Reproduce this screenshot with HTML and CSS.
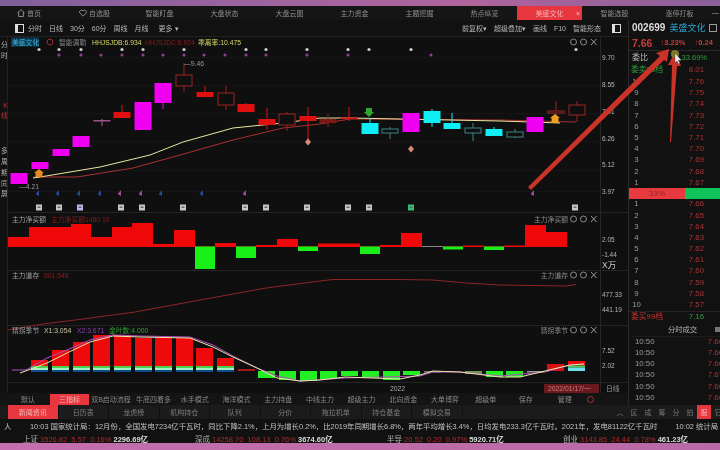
FILE: index.html
```html
<!DOCTYPE html>
<html lang="zh">
<head>
	<meta charset="UTF-8">
	<title>美盛文化</title>
	<link rel="stylesheet" href="styles.css">
	<script src="chart.js" defer></script>
</head>
<body>
	<div class="screen">
		<div class="strip"></div>
		<div class="nav">
			<div class="nav-item first"><svg class="nav-icon" viewBox="0 0 10 10"><path d="M.5 5 5 .8 9.5 5M2 4v5.300h6V4"/></svg>首页</div>
			<div class="nav-item"><svg class="nav-icon" viewBox="0 0 10 10"><path d="M5 9 1 5C-.5 2.500 3 0 5 2.500 7 0 10.500 2.500 9 5Z"/></svg>自选股</div>
			<div class="nav-item">智能盯盘</div>
			<div class="nav-item">大盘状态</div>
			<div class="nav-item">大盘云图</div>
			<div class="nav-item">主力资金</div>
			<div class="nav-item">主题挖掘</div>
			<div class="nav-item">热点纵览</div>
			<div class="nav-item active">美盛文化<span class="tab-close">×</span></div>
			<div class="nav-item">智能选股</div>
			<div class="nav-item">涨停打板</div>
			<div class="nav-min">—</div>
		</div>

		<div class="middle">
			<div class="left">
				<div class="toolbar">
					<span class="tool-box"></span>
					<span class="tool t-first">分时</span>
					<span class="tool">日线</span>
					<span class="tool">30分</span>
					<span class="tool">60分</span>
					<span class="tool">周线</span>
					<span class="tool">月线</span>
					<span class="tool t-more">更多 ▾</span>
					<span class="spacer"></span>
					<span class="tool">前复权▾</span>
					<span class="tool">超级叠加▾</span>
					<span class="tool">画线</span>
					<span class="tool">F10</span>
					<span class="tool">智能形态</span>
					<span class="tool-box t-last"></span>
				</div>
				<div class="chart-row">
					<div class="rail">
						<span>分</span><span>时</span>
						<span class="rail-b">K</span><span class="rail-c">线</span>
						<span class="rail-d">多</span><span>周</span><span>期</span><span>同</span><span>屏</span>
					</div>
					<svg id="chart" class="chart" viewBox="8 37 620 356" width="620" height="356"></svg>
				</div>
				<div class="formulas">
					<span class="f f0">默认</span>
					<span class="f f1 active">三指标</span>
					<span class="f f2">双B启动流程</span>
					<span class="f f3">牛底四看多</span>
					<span class="f f4">水手模式</span>
					<span class="f f4">海洋模式</span>
					<span class="f f4">主力持盘</span>
					<span class="f f4">中线主力</span>
					<span class="f f4">超级主力</span>
					<span class="f f4">北向资金</span>
					<span class="f f4">大单博弈</span>
					<span class="f f5">超级单</span>
					<span class="f f5">保存</span>
					<span class="f f6">管理</span>
					<span class="f-icon"></span>
				</div>
			</div>

			<div class="side">
				<div class="s-code"><b>002699</b><span class="s-name">美盛文化</span><span class="s-box"></span></div>
				<div class="s-price"><b>7.66</b><span>↑3.23%</span><span class="s-diff">↑0.24</span></div>
				<div class="s-ratio"><span>委比</span><em>33.69%</em></div>
				<div class="s-row s-head"><span class="green">委卖99档</span><i>8.01</i></div>
				<div class="s-row"><span>10</span><i>7.76</i></div>
				<div class="s-row"><span>9</span><i>7.75</i></div>
				<div class="s-row"><span>8</span><i>7.74</i></div>
				<div class="s-row"><span>7</span><i>7.73</i></div>
				<div class="s-row"><span>6</span><i>7.72</i></div>
				<div class="s-row"><span>5</span><i>7.71</i></div>
				<div class="s-row"><span>4</span><i>7.70</i></div>
				<div class="s-row"><span>3</span><i>7.69</i></div>
				<div class="s-row"><span>2</span><i>7.68</i></div>
				<div class="s-row"><span>1</span><i>7.67</i></div>
				<div class="s-bar"><span class="s-bar-red">33%</span><span class="s-bar-green"></span></div>
				<div class="s-row"><span>1</span><i>7.66</i></div>
				<div class="s-row"><span>2</span><i>7.65</i></div>
				<div class="s-row"><span>3</span><i>7.64</i></div>
				<div class="s-row"><span>4</span><i>7.63</i></div>
				<div class="s-row"><span>5</span><i>7.62</i></div>
				<div class="s-row"><span>6</span><i>7.61</i></div>
				<div class="s-row"><span>7</span><i>7.60</i></div>
				<div class="s-row"><span>8</span><i>7.59</i></div>
				<div class="s-row"><span>9</span><i>7.58</i></div>
				<div class="s-row"><span>10</span><i>7.57</i></div>
				<div class="s-row s-buy"><span class="red">委买99档</span><i class="green">7.16</i></div>
				<div class="s-trade-head">分时成交<span class="s-trade-icon"></span></div>
				<div class="s-trade"><span>10:50</span><i>7.66</i></div>
				<div class="s-trade"><span>10:50</span><i>7.66</i></div>
				<div class="s-trade"><span>10:50</span><i>7.66</i></div>
				<div class="s-trade"><span>10:50</span><i>7.67</i></div>
				<div class="s-trade"><span>10:50</span><i>7.66</i></div>
				<div class="s-trade"><span>10:50</span><i>7.66</i></div>
			</div>
		</div>

		<div class="tabs">
			<span class="tab active">新闻资讯</span>
			<span class="tab">日历表</span>
			<span class="tab">龙虎榜</span>
			<span class="tab">机构持仓</span>
			<span class="tab">队列</span>
			<span class="tab">分价</span>
			<span class="tab">拖拉机单</span>
			<span class="tab">持仓基金</span>
			<span class="tab">模拟交易</span>
			<span class="mini up">︿</span>
			<span class="mini">区</span><span class="mini">成</span><span class="mini">筹</span><span class="mini">分</span><span class="mini">拍</span>
			<span class="mini active">报</span><span class="mini">它</span>
		</div>
		<div class="news">
			<span class="news-cut">人</span>
			<span class="news-text">10:03 国家统计局：12月份，全国发电7234亿千瓦时，同比下降2.1%，上月为增长0.2%，比2019年同期增长6.8%，两年平均增长3.4%，日均发电233.3亿千瓦时。2021年，发电81122亿千瓦时</span>
			<span class="news-next">10:02 统计局</span>
		</div>
		<div class="ticker">
			<span class="tick t1">上证 <i>3526.82 &nbsp;5.57 &nbsp;0.16%</i> <b>2296.69亿</b></span>
			<span class="tick t2">深成 <i>14258.70 &nbsp;108.13 &nbsp;0.76%</i> <b>3674.60亿</b></span>
			<span class="tick t3">半导 <i>20.52 &nbsp;0.20 &nbsp;0.97%</i> <b>5920.71亿</b></span>
			<span class="tick t4">创业 <i>3143.85 &nbsp;24.44 &nbsp;0.78%</i> <b>461.23亿</b></span>
		</div>
		<div class="strip bottom"></div>

		<!-- red arrows drawn over the screen -->
		<svg class="overlay" viewBox="0 0 720 450" width="720" height="450">
			<polygon points="528,187 531,190 664,60 667,62 669,49 656,53 660,56"/>
			<polygon points="670,142 671,142 677,66 681,66 675,52 668,65 672,65"/>
			<circle class="dot" cx="675" cy="54" r="4"/>
			<path class="cursor" d="M675 53v10l2-2 1.500 3 1.500-.7-1.500-3h3Z"/>
		</svg>
	</div>
</body>
</html>
```

FILE: styles.css
```css
html, body { margin: 0; height: 100%; background: #111; overflow: hidden; }
.screen { position: relative; width: 720px; height: 450px; display: flex; flex-direction: column; overflow: hidden; background: #111; color: #a8a8a8; font: 7px/1 "Liberation Sans", "Noto Sans CJK SC", sans-serif; filter: blur(0.35px); }
.strip { height: 6px; flex: none; background: linear-gradient(90deg, #7f5f9b, #a0649f 40%, #b0649c 65%, #8a6098); }
.strip.bottom { flex: 1; background: linear-gradient(90deg, #c56fae, #bf6ca8 50%, #b86aa6); }
.spacer { flex: 1; }

.nav { height: 14px; flex: none; display: flex; background: #151515; }
.nav-item { width: 65px; flex: none; display: flex; align-items: center; justify-content: center; gap: 2px; position: relative; color: #8f8f8f; }
.nav-item.first { width: 62px; padding-right: 4px; box-sizing: border-box; }
.nav-item.active { background: #e8363f; color: #f0b0b0; }
.nav-icon { width: 8px; height: 8px; fill: none; stroke: #aaa; stroke-width: 1; }
.tab-close { position: absolute; right: 2px; top: 4px; color: #f3c6c6; }
.nav-min { line-height: 14px; color: #aaa; }

.middle { height: 385px; flex: none; display: flex; }
.left { width: 628px; flex: none; display: flex; flex-direction: column; }

.toolbar { height: 17px; flex: none; display: flex; align-items: center; gap: 7px; padding: 0 7px 0 15px; box-sizing: border-box; color: #b8b8b8; border-bottom: 1px solid #222; }
.tool { white-space: nowrap; }
.tool-box { width: 5px; height: 7px; border: 1px solid #ddd; border-left-width: 3px; flex: none; }
.t-last { margin-left: 4px; }
.t-first { margin-left: -3px; }
.t-more { margin-left: 3px; }

.chart-row { height: 356px; flex: none; display: flex; }
.rail { width: 8px; flex: none; display: flex; flex-direction: column; align-items: flex-end; overflow: hidden; padding-top: 3px; box-sizing: border-box; border-right: 1px solid #222; color: #b0b0b0; }
.rail span { height: 10.800px; flex: none; white-space: nowrap; margin-right: -1px; line-height: 10px; }
.rail span.rail-b, .rail span.rail-c { color: #c03030; }
.rail span.rail-b { margin-top: 39px; }
.rail span.rail-d { margin-top: 24px; }
.chart { display: block; background: #0f0f0f; }
.chart text { font: 6.800px "Liberation Sans", "Noto Sans CJK SC", sans-serif; fill: #9a9a9a; }
.chart text.axis { fill: #b5b5b5; font-size: 6.500px; }

.formulas { height: 12px; flex: none; display: flex; align-items: center; background: #141414; color: #888; }
.f { white-space: nowrap; text-align: center; flex: none; line-height: 11px; }
.f0 { width: 50px; padding-left: 6px; box-sizing: border-box; }
.f1 { width: 39px; }
.f2 { width: 44px; }
.f3 { width: 41px; }
.f4 { width: 41.700px; }
.f5 { width: 40px; }
.f6 { width: 38px; }
.f.active { background: #e8363f; color: #f2b8b8; }
.f-icon { width: 5px; height: 5px; border: 1px solid #b83030; border-radius: 50%; margin-left: 3px; }

.side { width: 92px; flex: none; border-left: 1px solid #2a2a2a; box-sizing: border-box; overflow: hidden; padding-left: 3px; }
.s-code { height: 16px; display: flex; align-items: center; color: #ddd; font-size: 10px; }
.s-name { color: #2aa6d8; font-size: 9px; margin-left: 4px; white-space: nowrap; }
.s-box { width: 6px; height: 6px; border: 1px solid #999; margin-left: 4px; flex: none; }
.s-price { height: 14px; display: flex; align-items: center; color: #c83a3a; gap: 8px; white-space: nowrap; }
.s-price b { font-size: 10.500px; }
.s-price span { font-size: 7.500px; font-weight: bold; }
.s-diff { margin-left: 1px; }
.s-ratio { height: 14px; margin-left: -3px; padding: 0 13px 0 3px; border-top: 1px solid #2a2a2a; box-sizing: border-box; display: flex; align-items: center; justify-content: space-between; color: #bbb; font-size: 8px; }
.s-ratio em { font-style: normal; color: #2f9e3f; font-size: 7.500px; }
.s-row { height: 11.200px; display: flex; justify-content: space-between; align-items: center; color: #9a9a9a; font-size: 7.800px; white-space: nowrap; }
.s-row span { width: 9px; text-align: center; }
.s-row i { font-style: normal; color: #a83535; margin-right: 16px; }
.s-head { height: 12.400px; margin-left: -1px; }
.s-row.s-head span, .s-row.s-buy span { width: auto; }
.s-bar { height: 11px; margin: -0.600px 0 0 -3px; display: flex; }
.s-bar-red { width: 56px; background: #e8393f; color: #992028; text-align: center; line-height: 11px; font-size: 8px; }
.s-bar-green { flex: 1; background: #0fc25a; }
.s-buy { height: 12px; margin-left: -3px; padding-left: 2px; border-top: 1px solid #2a2020; box-sizing: border-box; }
.s-row i.green, .green { color: #2f9e3f; }
.red { color: #c83030; }
.s-trade-head { height: 14px; position: relative; text-align: center; line-height: 14px; color: #b5b5b5; padding-left: 13px; font-size: 7.300px; border-bottom: 1px solid #1d1d1d; box-sizing: border-box; }
.s-trade-icon { position: absolute; right: -1px; top: 4px; width: 6px; height: 5px; background: #777; }
.s-trade { height: 11.100px; display: flex; justify-content: space-between; align-items: center; color: #9a9a9a; font-size: 7.800px; padding-left: 3px; white-space: nowrap; overflow: hidden; }
.s-trade i { font-style: normal; color: #a83535; margin-right: -3px; }

.tabs { height: 14px; flex: none; display: flex; align-items: center; background: #1b1b1b; color: #7d7d7d; padding-left: 8px; overflow: hidden; }
.tab { width: 50.500px; flex: none; height: 100%; display: flex; align-items: center; justify-content: center; border-right: 1px solid #111; box-sizing: border-box; white-space: nowrap; }
.tab.active { background: #e8363f; color: #f2b8b8; }
.mini { width: 14px; height: 100%; flex: none; display: flex; align-items: center; justify-content: center; color: #777; }
.mini.up { margin-left: 150.500px; }
.mini.active { background: #e8363f; color: #f2b8b8; }

.news { height: 16px; flex: none; display: flex; align-items: center; white-space: nowrap; overflow: hidden; color: #c0c0c0; font-size: 7.400px; }
.news-cut { width: 30px; flex: none; padding-left: 4px; box-sizing: border-box; }
.news-next { margin-left: 18px; }

.ticker { height: 8px; flex: none; display: flex; overflow: hidden; color: #b5b5b5; font-size: 7.500px; white-space: nowrap; line-height: 12px; }
.tick { flex: none; margin-top: -1px; }
.tick i { font-style: normal; color: #b02a2a; }
.tick b { color: #ddd; }
.t1 { margin-left: 23px; width: 172px; }
.t2 { width: 192px; }
.t3 { width: 176px; }
.t4 { width: 150px; }

.overlay { position: absolute; left: 0; top: 0; pointer-events: none; }
.overlay polygon { fill: #c93328; }
.dot { fill: #7c7a28; }
.cursor { fill: #eee; stroke: #333; stroke-width: 0.400; }
```

FILE: chart.js
```javascript
// x, body top, body bottom, wick top, wick bottom, kind
const candles = [
	[19, 173, 184, 173, 184, "m"], [40, 162, 169, 162, 169, "m"], [61, 149, 156, 149, 156, "m"],
	[81, 136, 147, 136, 147, "m"], [102, 120, 121.500, 119, 126, "p"], [122, 112, 118, 105, 118, "r"],
	[143, 102, 130, 102, 130, "m"], [163, 83, 103, 83, 109, "m"], [184, 75, 86, 63, 92, "h"],
	[205, 92, 97, 86, 97, "r"], [226, 93, 105, 86, 110, "h"], [246, 104, 112, 103, 112, "r"],
	[267, 119, 125, 108, 130, "r"], [287, 114, 125, 112, 131, "h"], [308, 116, 121, 107, 140, "r"],
	[328, 119, 123, 114, 127, "d"], [349, 117.500, 119, 107, 121, "r"], [370, 123, 134, 118, 134, "c"],
	[390, 129, 133, 127, 139, "t"], [411, 113, 132, 113, 132, "m"], [432, 111, 123, 109, 127, "c"],
	[452, 123, 129, 113, 129, "c"], [473, 128, 133, 123, 141, "t"], [494, 129, 136, 127, 136, "c"],
	[515, 132, 137, 129, 138, "t"], [535, 117, 132, 117, 132, "m"], [556, 111, 113, 101, 123, "h"],
	[577, 105, 115, 101, 122, "h"]
];
const kinds = {
	m: ["#f000f0", "#f000f0"], r: ["#e01010", "#e01010"], d: ["#7d1818", "#a02020"], p: ["#a05090", "#b060a0"],
	h: ["none", "#9c2525"], c: ["#10eef5", "#10eef5"], t: ["none", "#3f8585"]
};
// x start, x end, top, bottom
const flow = [
	[8, 29, 237, "r"], [29, 71, 227, "r"], [71, 91, 224, "r"], [91, 112, 237, "r"], [112, 132, 227, "r"],
	[132, 153, 223, "r"], [153, 174, 244, "r"], [174, 195, 230, "r"], [195, 215, 269, "g"], [215, 236, 243, "r"],
	[236, 256, 258, "g"], [256, 277, 245, "r"], [277, 298, 239, "r"], [298, 318, 251, "g"], [318, 360, 243.500, "r"],
	[360, 380, 254, "g"], [380, 401, 245, "r"], [401, 422, 233, "r"], [443, 463, 249.500, "g"], [463, 484, 245.500, "r"],
	[484, 504, 250, "g"], [504, 525, 245.500, "r"], [525, 546, 225, "r"], [546, 567, 232, "r"]
];
const seasonRed = [[31, 360], [52, 350], [73, 342], [93, 335], [114, 335], [135, 338], [155, 338], [176, 338], [196, 348], [217, 358]];
const seasonGreen = [
	[258, 378], [279, 380], [300, 381], [320, 379], [341, 376], [362, 378], [383, 380], [403, 375],
	[465, 374], [486, 377], [506, 377]
];

let out = "";
const rect = (x, y, w, h, fill) => { out += `<rect x="${x}" y="${y}" width="${w}" height="${h}" fill="${fill}"/>`; };
const line = (pts, color, w) => { out += `<polyline points="${pts.join(" ")}" fill="none" stroke="${color}" stroke-width="${w || 1}"/>`; };
const text = (x, y, s, color, cls) => { out += `<text x="${x}" y="${y}" ${color ? `style="fill:${color}"` : ""} ${cls ? `class="${cls}"` : ""}>${s}</text>`; };

// grid
[57, 85, 113, 141, 170, 191].forEach(y => rect(8, y, 592, 0.500, "#1f1f1f"));
[212, 270, 325, 382].forEach(y => rect(8, y, 620, 1, "#242424"));
rect(600, 37, 1, 356, "#262626");

// moving averages sit behind the candles
line(["33,177", "77,177", "133,168", "173,157", "233,140", "283,128", "320,124", "350,119", "500,120", "576,122"], "#a83030");
line(["33,178", "40,177", "100,167", "150,155", "183,142", "233,128", "283,123", "320,118", "350,118", "500,121", "530,122", "560,123"], "#e8e6a0");

candles.forEach(([x, t, b, wt, wb, k]) => {
	const [fill, stroke] = kinds[k];
	rect(x - 0.500, wt, 1, wb - wt, stroke);
	if (fill === "none") {
		rect(x - 8.500, t, 17, b - t, "#0f0f0f");
		out += `<rect x="${x - 8}" y="${t}" width="16" height="${b - t}" fill="none" stroke="${stroke}"/>`;
	} else {
		rect(x - 8.500, t, 17, b - t, fill);
	}
});

// signal rows
[39, 59, 81, 122, 143, 184, 246, 266, 307, 348, 369, 411, 576].forEach(x => { out += `<circle cx="${x}" cy="49.500" r="1.600" fill="#cfcfcf"/>`; });
[59, 81, 101, 122, 143, 163, 184, 204, 225, 246, 266, 307, 348, 431].forEach(x => { out += `<circle cx="${x}" cy="55" r="1.600" fill="#8c3f8c"/>`; });
[[38, 0], [58, 0], [79, 0], [100, 0], [120, 1], [141, 1], [161, 0], [202, 0], [245, 1], [533, 1]].forEach(([x, m]) => {
	out += `<polygon points="${x + 1},190 ${x + 1},196 ${x - 2.500},194" fill="${m ? "#a04a9c" : "#284a94"}"/>`;
});
[39, 59, 80, 121, 142, 183, 245, 266, 307, 348, 369, 411, 575].forEach(x => {
	const c = x === 80 ? "#c8b0ec" : x === 411 ? "#2fc070" : "#c8c8c8";
	rect(x - 3, 204.500, 6, 6, c);
	rect(x - 1.500, 206.500, 3, 1.500, "#666");
});

// price markers
out += '<polygon points="39,169 44,173 42.500,173 42.500,177 35.500,177 35.500,173 34,173" fill="#e88a20"/>';
out += '<polygon points="555,114 560,118 558.500,118 558.500,123 551.500,123 551.500,118 550,118" fill="#efa020"/>';
out += '<polygon points="369,117 374,112 372,112 372,108 366,108 366,112 364,112" fill="#2ea82e"/>';
[[308, 142], [411, 149]].forEach(([x, y]) => { out += `<polygon points="${x},${y - 3.500} ${x + 3},${y} ${x},${y + 3.500} ${x - 3},${y}" fill="#d98a78"/>`; });

// labels of chart 1
rect(11, 37.500, 28, 9, "#0d3a50");
text(12, 44.500, "美盛文化", "#3cb4dc");
out += '<circle cx="50" cy="42" r="3" fill="none" stroke="#9c2a2a"/>';
text(59, 44.500, "智能调勒", "#8a8a8a");
text(92, 44.500, "HHJSJDB:6.934", "#d8d86a");
text(145, 44.500, "HHJSJDC:6.924", "#8c1c1c");
text(198, 44.500, "乖离率:10.475", "#d8d86a");
text(184, 66, "—9.46", "#999");
text(19, 189, "—4.21", "#999");

// main flow panel
rect(8, 246, 560, 1, "#7a1414");
rect(422, 246, 21, 1, "#888");
flow.forEach(([a, b, y, c]) => {
	if (c === "r") rect(a, y, b - a, 247 - y, "#f00808");
	else rect(a, 246.500, b - a, y - 246.500, "#18f018");
});
text(12, 221.500, "主力净买额", "#a0a0a0");
text(51, 221.500, "主力净买额1480.10", "#7c2020");
text(12, 277.500, "主力道存", "#a0a0a0");
text(44, 277.500, "501.548", "#8c1c1c");
line(["8,330", "43,324", "83,319", "135,312", "200,300", "266,288", "320,281", "333,279.500", "400,279.500", "433,280", "466,283", "500,285", "566,286", "576,284.500"], "#8c2626");

// season panel
seasonRed.forEach(([x, y]) => {
	rect(x, y, 17, 366 - y, "#ee0a0a");
	rect(x, 366, 17, 2, "#4bd24b");
	rect(x, 368, 17, 2, "#a0f0c8");
	rect(x, 370, 17, 2, "#0f4d8a");
});
rect(238, 369, 17, 2, "#a81818");
rect(424, 371, 17, 1.500, "#777");
rect(527, 371, 17, 1.500, "#999");
seasonGreen.forEach(([x, y]) => rect(x, 371, 17, y - 371, x === 465 ? "#6a9a50" : "#22ee22"));
rect(547, 364, 17, 7, "#d81010");
rect(568, 361, 17, 4.500, "#ee0a0a");
rect(568, 365.500, 17, 2, "#4bd24b");
rect(568, 367.500, 17, 3.500, "#70e0f0");
line(["12,370", "26,370", "47,358", "67,350", "90,340", "113,335", "140,336", "190,337", "213,345", "233,356", "257,368", "277,376", "300,381", "345,378", "420,376", "433,372", "460,372", "500,376", "545,372", "570,365", "584,364"], "#b050c0");
line(["20,373", "47,363", "67,353", "90,342", "113,336", "140,337", "190,338", "213,347", "233,357", "257,368", "277,378", "300,381", "320,380", "345,377", "400,379", "420,375", "433,371", "460,372", "500,377", "520,377", "545,371", "570,365", "584,364"], "#eee8a8");
text(12, 332.500, "猜拐季节", "#a0a0a0");
text(44, 332.500, "X1:3.054", "#c8c8a0");
text(77, 332.500, "X2:3.671", "#8c3cb0");
text(109, 332.500, "金叶数:4.000", "#2fa02f");

// panel titles and their buttons
[[42, ""], [219, "主力净买额"], [275, "主力道存"], [330, "猜拐季节"]].forEach(([y, s]) => {
	if (s) out += `<text x="568" y="${y + 2.500}" text-anchor="end" style="fill:#8c8c8c">${s}</text>`;
	out += `<circle cx="573.500" cy="${y}" r="3" fill="none" stroke="#888"/><circle cx="583.500" cy="${y}" r="3" fill="none" stroke="#888"/>`;
	out += `<path d="M591 ${y - 3}l5.500 6m0-6l-5.500 6" stroke="#999" fill="none"/>`;
});

// price axis
[[602, 60, "9.70"], [602, 87, "8.55"], [602, 114, "7.41"], [602, 141, "6.26"], [602, 167, "5.12"], [602, 194, "3.97"],
	[602, 241.500, "2.05"], [602, 256.500, "-1.44"], [602, 297, "477.33"], [602, 312, "441.19"], [602, 352.500, "7.52"], [602, 368, "2.02"]
].forEach(([x, y, s]) => text(x, y, s, "", "axis"));
out += '<text x="602" y="268" style="fill:#ccc;font-size:8.500px">X万</text>';

// time axis
text(390, 390.500, "2022", "#a8a8a8");
rect(544, 384, 55, 9, "#6a1a1e");
text(548, 391, "2022/01/17/一", "#c87878");
text(606, 391, "日线", "#999");

document.getElementById("chart").innerHTML = out;
```
